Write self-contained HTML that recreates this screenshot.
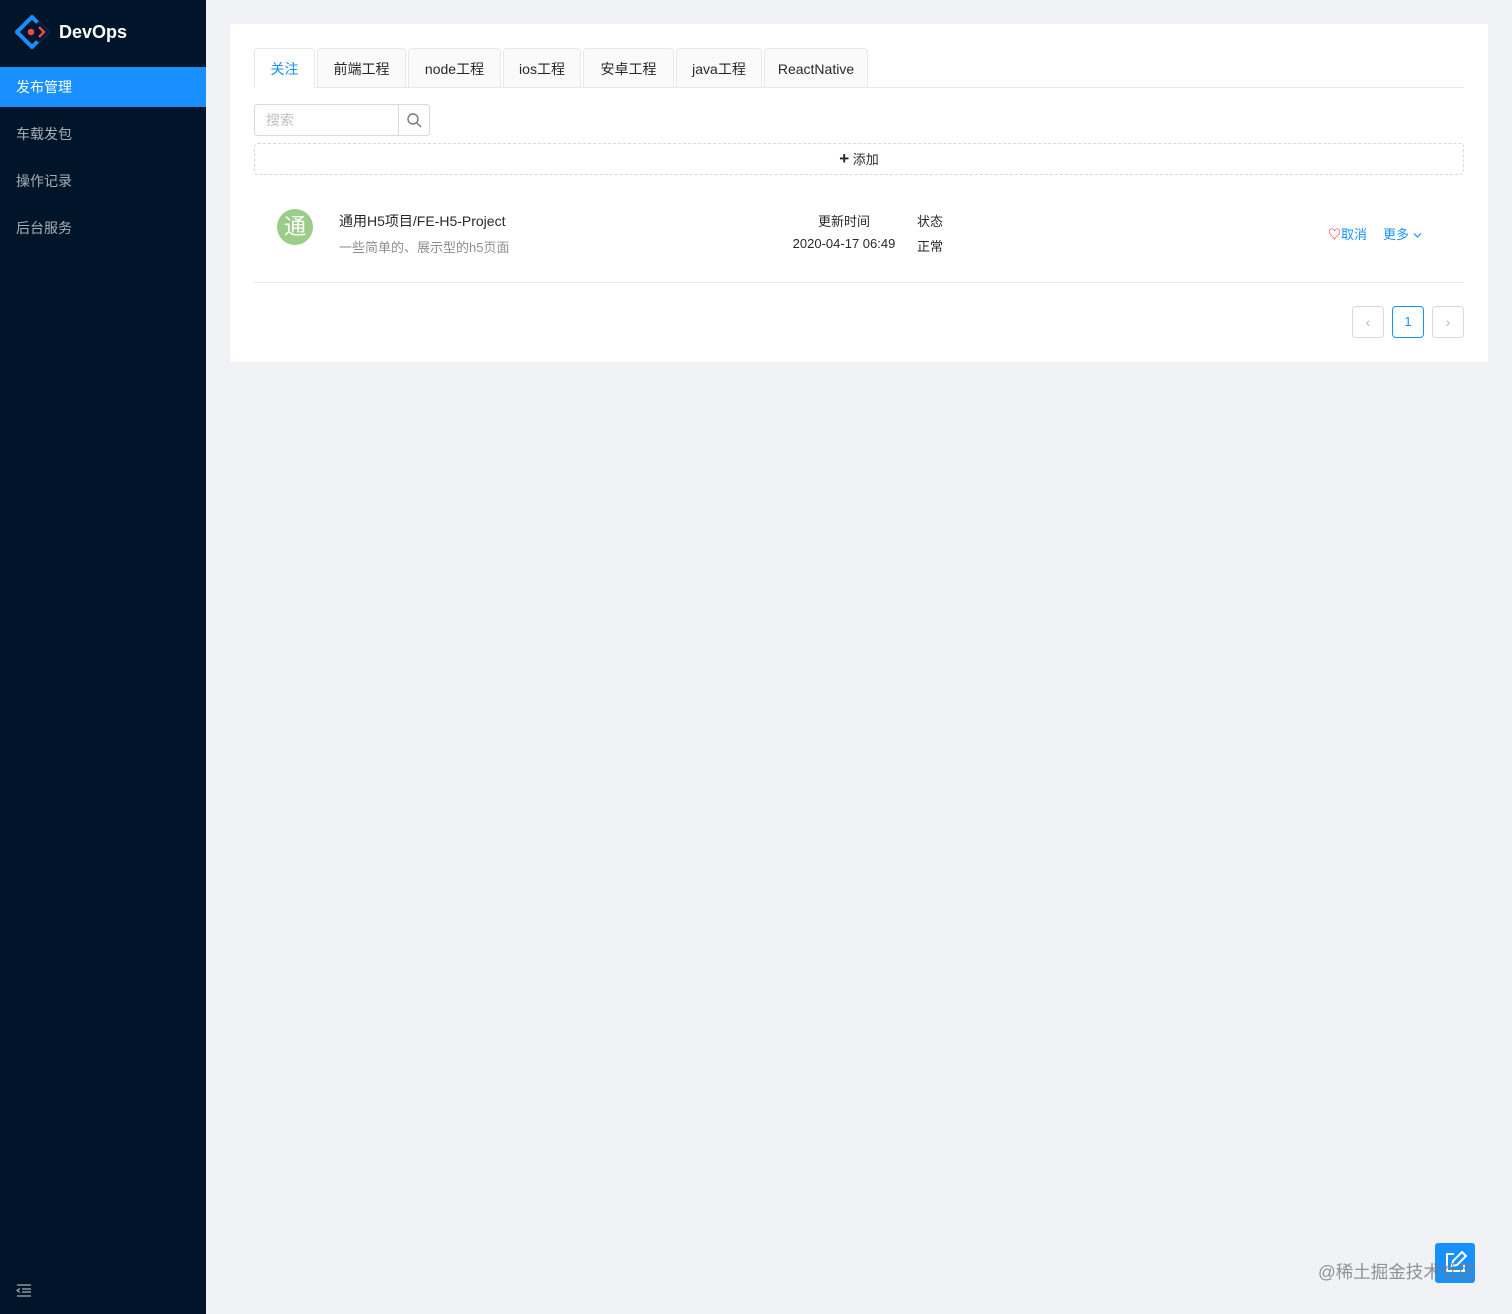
<!DOCTYPE html>
<html><head><meta charset="utf-8"><style>
*{box-sizing:border-box;margin:0;padding:0}
body{width:1512px;height:1314px;background:#f0f2f5;font-family:"Liberation Sans","Noto Sans CJK SC",sans-serif;font-size:14px;color:rgba(0,0,0,.85);position:relative;overflow:hidden}
.side{position:absolute;left:0;top:0;width:206px;height:1314px;background:#001529}
.logo{height:64px;display:flex;align-items:center;padding-left:15px;color:#fff;font-size:18px;font-weight:600}
.menu div{height:40px;line-height:40px;padding-left:16px;color:rgba(255,255,255,.65);font-size:14px;margin-bottom:7px}
.menu .act{background:#1890ff;color:#fff}
.card{position:absolute;left:230px;top:24px;width:1258px;height:338px;background:#fff}
.tabs{position:absolute;left:24px;top:24px;right:24px;height:40px;border-bottom:1px solid #e8e8e8}
.tab{position:absolute;top:0;height:40px;line-height:40px;border:1px solid #e8e8e8;background:#fafafa;border-radius:4px 4px 0 0;text-align:center;font-size:14px}
.tab.a{background:#fff;color:#1890ff;border-bottom-color:#fff}
.search{position:absolute;left:24px;top:80px;width:176px;height:32px;border:1px solid #d9d9d9;border-radius:4px;color:#bfbfbf;padding-left:11px;line-height:30px}
.search .b{position:absolute;right:0;top:0;width:31px;height:30px;border-left:1px solid #d9d9d9}
.add{position:absolute;left:24px;top:119px;right:24px;height:32px;border:1px dashed #d9d9d9;border-radius:4px;text-align:center;line-height:30px;font-size:13px}
.row{position:absolute;left:24px;right:24px;top:168px;height:91px;border-bottom:1px solid #e8e8e8}
.av{position:absolute;left:23px;top:17px;width:36px;height:36px;border-radius:50%;background:#9ccc8a;color:#fff;text-align:center;line-height:36px;font-size:22px}
.pg{position:absolute;top:282px;width:32px;height:32px;border:1px solid #d9d9d9;border-radius:4px;text-align:center;line-height:30px;color:#bbb}
</style></head><body>
<div class="side">
<div class="logo"><svg width="34" height="34" viewBox="0 0 34 34"><path d="M17 2 L32 17 L17 32 L2 17 Z" fill="none" stroke="#1890ff" stroke-width="4"/><path d="M22 8 L31 17 L22 26" fill="none" stroke="#001529" stroke-width="5"/><path d="M24 12 L29 17 L24 22" fill="none" stroke="#e84a4a" stroke-width="2.5"/><circle cx="16" cy="17" r="3.3" fill="#e84a4a"/></svg><span style="margin-left:10px">DevOps</span></div>
<div class="menu" style="margin-top:3px"><div class="act">发布管理</div><div>车载发包</div><div>操作记录</div><div>后台服务</div></div>
<svg style="position:absolute;left:16px;top:1284px" width="16" height="13" viewBox="0 0 16 13"><path d="M1 1h14M6 5h9M6 8h9M1 12h14M4 4.5L1 6.5l3 2" fill="none" stroke="rgba(255,255,255,.65)" stroke-width="1.2"/></svg>
</div>
<div class="card">
<div class="tabs">
<div class="tab a" style="left:0;width:61px">关注</div>
<div class="tab" style="left:63px;width:89px">前端工程</div>
<div class="tab" style="left:154px;width:93px">node工程</div>
<div class="tab" style="left:249px;width:78px">ios工程</div>
<div class="tab" style="left:329px;width:91px">安卓工程</div>
<div class="tab" style="left:422px;width:86px">java工程</div>
<div class="tab" style="left:510px;width:104px">ReactNative</div>
</div>
<div class="search">搜索<div class="b"><svg width="31" height="30" viewBox="0 0 31 30"><circle cx="14" cy="14" r="5" fill="none" stroke="#777" stroke-width="1.4"/><path d="M18 18l4 4" stroke="#777" stroke-width="1.4"/></svg></div></div>
<div class="add"><b style="font-size:17px">+</b> 添加</div>
<div class="row">
<div class="av">通</div>
<div style="position:absolute;left:85px;top:19px;font-size:14px">通用H5项目/FE-H5-Project</div>
<div style="position:absolute;left:85px;top:45px;color:rgba(0,0,0,.45);font-size:13px">一些简单的、展示型的h5页面</div>
<div style="position:absolute;left:535px;top:19px;width:110px;text-align:center;font-size:13px">更新时间</div>
<div style="position:absolute;left:535px;top:44px;width:110px;text-align:center;font-size:13px">2020-04-17 06:49</div>
<div style="position:absolute;left:663px;top:19px;font-size:13px">状态</div>
<div style="position:absolute;left:663px;top:44px;font-size:13px">正常</div>
<div style="position:absolute;left:1074px;top:32px;color:#1890ff;font-size:13px;white-space:nowrap"><span style="color:#f5222d">♡</span>取消<span style="margin-left:16px">更多</span><svg style="margin-left:4px" width="9" height="7" viewBox="0 0 9 7"><path d="M1 1.5l3.5 3.5 3.5-3.5" fill="none" stroke="#1890ff" stroke-width="1.2"/></svg></div>
</div>
<div class="pg" style="left:1122px">‹</div>
<div class="pg" style="left:1162px;border-color:#1890ff;color:#1890ff;font-size:13px">1</div>
<div class="pg" style="left:1202px">›</div>
</div>
<div style="position:absolute;left:1435px;top:1243px;width:40px;height:40px;background:#1890ff;border-radius:3px"><svg width="40" height="40" viewBox="0 0 40 40"><path d="M19 11h-7v17h17v-7" fill="none" stroke="#fff" stroke-width="2"/><path d="M17 23l1-5 9-9 4 4-9 9z" fill="none" stroke="#fff" stroke-width="2"/></svg></div>
<div style="position:absolute;left:1318px;top:1259px;color:rgba(120,120,120,.8);font-size:17.5px">@稀土掘金技术社区</div>
</body></html>
